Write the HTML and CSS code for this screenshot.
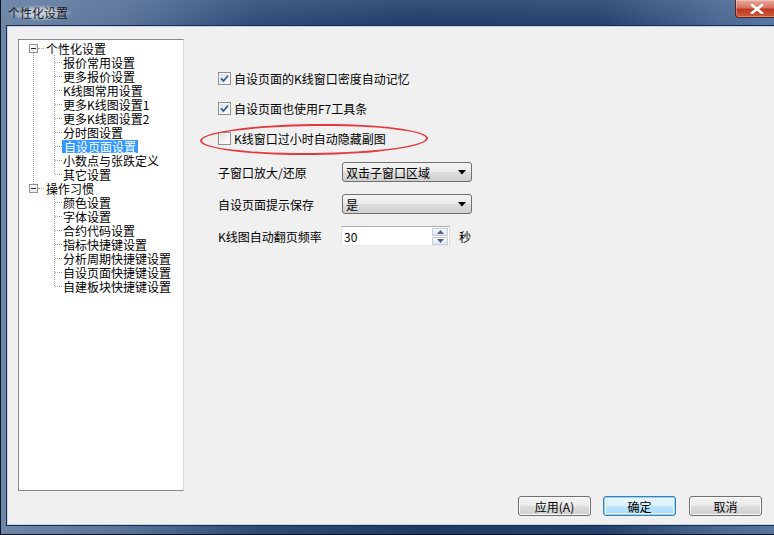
FILE: index.html
```html
<!DOCTYPE html>
<html>
<head>
<meta charset="utf-8">
<link rel="stylesheet" href="styles.css">
</head>
<body>
<div class="window">
  <div class="titlebar">
    <span class="title">个性化设置</span>
    <span class="close"><svg width="14" height="10" viewBox="0 0 14 10"><path d="M2 1 L12 9 M12 1 L2 9" stroke="#fff" stroke-width="2.6" stroke-linecap="square"/></svg></span>
  </div>
  <div class="client">
    <div class="main">
      <ul class="tree">
        <li class="root">
          <div class="row"><span class="exp"></span><span class="hline"></span><span class="lbl">个性化设置</span></div>
          <ul class="kids">
            <li><span class="lbl">报价常用设置</span></li>
            <li><span class="lbl">更多报价设置</span></li>
            <li><span class="lbl">K线图常用设置</span></li>
            <li><span class="lbl">更多K线图设置1</span></li>
            <li><span class="lbl">更多K线图设置2</span></li>
            <li><span class="lbl">分时图设置</span></li>
            <li><span class="lbl sel">自设页面设置</span></li>
            <li><span class="lbl">小数点与张跌定义</span></li>
            <li><span class="lbl">其它设置</span></li>
          </ul>
        </li>
        <li class="root">
          <div class="row"><span class="exp"></span><span class="hline"></span><span class="lbl">操作习惯</span></div>
          <ul class="kids">
            <li><span class="lbl">颜色设置</span></li>
            <li><span class="lbl">字体设置</span></li>
            <li><span class="lbl">合约代码设置</span></li>
            <li><span class="lbl">指标快捷键设置</span></li>
            <li><span class="lbl">分析周期快捷键设置</span></li>
            <li><span class="lbl">自设页面快捷键设置</span></li>
            <li><span class="lbl">自建板块快捷键设置</span></li>
          </ul>
        </li>
      </ul>
      <div class="panel">
        <div class="chk-row">
          <span class="cb on"><svg width="11" height="11" viewBox="0 0 11 11"><path d="M2 5.5 L4.5 8 L9 2.5" fill="none" stroke="#3b5998" stroke-width="1.8"/></svg></span>
          <span>自设页面的K线窗口密度自动记忆</span>
        </div>
        <div class="chk-row">
          <span class="cb on"><svg width="11" height="11" viewBox="0 0 11 11"><path d="M2 5.5 L4.5 8 L9 2.5" fill="none" stroke="#3b5998" stroke-width="1.8"/></svg></span>
          <span>自设页面也使用F7工具条</span>
        </div>
        <div class="chk-row marked">
          <span class="cb"></span>
          <span>K线窗口过小时自动隐藏副图</span>
          <span class="ellipse"></span>
        </div>
        <div class="form-row first">
          <span class="flabel">子窗口放大/还原</span>
          <span class="combo"><span>双击子窗口区域</span><svg width="8" height="5" viewBox="0 0 8 5"><polygon points="0,0 8,0 4,4.5" fill="#000"/></svg></span>
        </div>
        <div class="form-row">
          <span class="flabel">自设页面提示保存</span>
          <span class="combo"><span>是</span><svg width="8" height="5" viewBox="0 0 8 5"><polygon points="0,0 8,0 4,4.5" fill="#000"/></svg></span>
        </div>
        <div class="form-row">
          <span class="flabel">K线图自动翻页频率</span>
          <span class="spin">
            <span class="spin-val">30</span>
            <span class="spin-btns">
              <span class="sb"><svg width="7" height="4" viewBox="0 0 7 4"><polygon points="0,4 7,4 3.5,0" fill="#4d6185"/></svg></span>
              <span class="sb"><svg width="7" height="4" viewBox="0 0 7 4"><polygon points="0,0 7,0 3.5,4" fill="#4d6185"/></svg></span>
            </span>
          </span>
          <span class="unit">秒</span>
        </div>
      </div>
    </div>
    <div class="buttons">
      <span class="btn">应用(A)</span>
      <span class="btn def">确定</span>
      <span class="btn">取消</span>
    </div>
  </div>
</div>
</body>
</html>
```
FILE: styles.css
```css
html, body {
  margin: 0;
  padding: 0;
  width: 774px;
  height: 535px;
  overflow: hidden;
  background: #0f2040;
}
body {
  font-family: "Noto Sans CJK SC", "DejaVu Sans", sans-serif;
  font-size: 12px;
  color: #000;
}
.window {
  width: 782px;
  height: 535px;
  box-sizing: border-box;
  padding: 0 7px 10px 7px;
  display: flex;
  flex-direction: column;
  background:
    linear-gradient(180deg, rgba(120,150,190,0.25) 0px, rgba(0,0,0,0) 26px),
    linear-gradient(90deg, #6f86a6 0px, #5b7498 120px, #2d4a76 260px, #1f3a66 420px, #23406c 600px, #4a6890 720px, #5878a0 782px);
  box-shadow: inset 1px 0 0 #0a1428, inset 0 -1px 0 #0a1428;
}
.titlebar {
  height: 26px;
  display: flex;
  justify-content: space-between;
  align-items: flex-start;
  flex: none;
}
.title {
  margin-top: 5px;
  margin-left: 1px;
  font-size: 12px;
  line-height: 16px;
  color: #1a1a1a;
  padding: 0 4px 0 0;
  background: radial-gradient(ellipse at center, rgba(225,232,240,0.75) 30%, rgba(225,232,240,0) 72%);
}
.close {
  width: 43px;
  height: 18px;
  margin-right: -3px;
  box-sizing: border-box;
  border: 1px solid #5a2020;
  border-top: none;
  border-radius: 0 0 4px 4px;
  background: linear-gradient(180deg, #e8a89a 0%, #d77462 45%, #c0391f 55%, #cd5a3c 100%);
  display: flex;
  align-items: center;
  justify-content: center;
  box-shadow: inset 0 0 0 1px rgba(255,255,255,0.3);
}
.client {
  flex: 1;
  background: #f0f0f0;
  border: 1px solid #c7d2e0;
  box-shadow: 0 0 0 1px #1a2e50;
  padding: 12px 0 0 10px;
  display: flex;
  flex-direction: column;
}
.main {
  display: flex;
  height: 452px;
}
.tree {
  list-style: none;
  margin: 0;
  padding: 1px 0 0 0;
  width: 166px;
  height: 452px;
  box-sizing: border-box;
  background: #fff;
  border: 1px solid #828790;
  border-right-color: #d9d9d9;
  border-bottom-color: #8a8a8a;
}
.root {
  position: relative;
}
.root:first-child::before {
  content: "";
  position: absolute;
  left: 14px;
  top: 12px;
  bottom: -3px;
  border-left: 1px dotted #a0a0a0;
}
.row {
  height: 14px;
  display: flex;
  align-items: center;
  padding-left: 10px;
}
.exp {
  width: 9px;
  height: 9px;
  box-sizing: border-box;
  border: 1px solid #919191;
  background: linear-gradient(135deg, #ffffff, #e6e6e6);
  position: relative;
  z-index: 1;
}
.exp::after {
  content: "";
  position: absolute;
  left: 1px;
  top: 3px;
  width: 5px;
  height: 1px;
  background: #2b2b2b;
}
.hline {
  width: 6px;
  margin-right: 1px;
  border-top: 1px dotted #a0a0a0;
}
.lbl {
  line-height: 13px;
  padding: 0 1px;
  white-space: nowrap;
}
.kids {
  list-style: none;
  margin: 0;
  padding: 0;
  position: relative;
}
.kids::before {
  content: "";
  position: absolute;
  left: 35px;
  top: 0;
  bottom: 7px;
  border-left: 1px dotted #a0a0a0;
}
.kids li {
  height: 14px;
  display: flex;
  align-items: center;
  padding-left: 36px;
}
.kids li::before {
  content: "";
  width: 7px;
  border-top: 1px dotted #a0a0a0;
}
.sel {
  background: #3399ff;
  color: #fff;
  padding: 0 2px;
}
.panel {
  margin-left: 34px;
  padding-top: 30px;
  display: flex;
  flex-direction: column;
}
.chk-row {
  height: 18px;
  display: flex;
  align-items: center;
  gap: 3px;
  margin-bottom: 12px;
  white-space: nowrap;
}
.marked {
  position: relative;
}
.ellipse {
  position: absolute;
  left: -18px;
  top: -5px;
  width: 228px;
  height: 31px;
  box-sizing: border-box;
  border: 2px solid #e23a3f;
  border-radius: 50%;
  transform: rotate(-0.6deg);
}
.cb {
  width: 13px;
  height: 13px;
  box-sizing: border-box;
  border: 1px solid #8f8f8f;
  background: linear-gradient(135deg, #dcdcdc 0%, #f4f4f4 60%, #ffffff 100%);
  box-shadow: inset 0 0 0 1px #f4f4f4;
  display: flex;
  align-items: center;
  justify-content: center;
}
.cb.on {
  background: linear-gradient(135deg, #d9dfe8 0%, #eef2f7 60%, #ffffff 100%);
}
.form-row {
  height: 20px;
  display: flex;
  align-items: center;
  margin-bottom: 12px;
  white-space: nowrap;
}
.form-row.first {
  margin-top: 3px;
}
.flabel {
  width: 124px;
}
.combo {
  width: 130px;
  height: 20px;
  box-sizing: border-box;
  border: 1px solid #707070;
  border-radius: 3px;
  background: linear-gradient(180deg, #f2f2f2 0%, #ebebeb 50%, #dddddd 51%, #cfcfcf 100%);
  display: flex;
  align-items: center;
  justify-content: space-between;
  padding: 0 5px 0 3px;
}
.spin {
  width: 109px;
  height: 20px;
  margin-left: -1px;
  box-sizing: border-box;
  border: 1px solid #abadb3;
  border-left-color: #e2e3ea;
  border-right-color: #dbdfe6;
  border-bottom-color: #e3e9ef;
  background: #fff;
  display: flex;
  align-items: center;
  justify-content: space-between;
  padding: 0 1px 0 2px;
}
.spin-btns {
  display: flex;
  flex-direction: column;
  gap: 0;
  width: 16px;
}
.sb {
  height: 8px;
  box-sizing: border-box;
  border: 1px solid #c7ccd6;
  background: linear-gradient(180deg, #f6f7f9, #e3e7ee);
  display: flex;
  align-items: center;
  justify-content: center;
}
.sb + .sb {
  margin-top: 1px;
}
.unit {
  margin-left: 9px;
}
.buttons {
  margin-top: 5px;
  height: 20px;
  display: flex;
  justify-content: flex-end;
  gap: 12px;
  padding-right: 12px;
}
.btn {
  width: 73px;
  height: 20px;
  box-sizing: border-box;
  border: 1px solid #707070;
  border-radius: 3px;
  background: linear-gradient(180deg, #f2f2f2 0%, #ebebeb 50%, #dddddd 51%, #cfcfcf 100%);
  display: flex;
  align-items: center;
  justify-content: center;
  box-shadow: inset 0 0 0 1px #fbfbfb;
}
.btn.def {
  border-color: #3c7fb1;
  background: linear-gradient(180deg, #eaf6fd 0%, #d9f0fc 50%, #bee6fd 51%, #a7d9f5 100%);
  box-shadow: inset 0 0 0 1px #8fd0f3, inset 0 0 0 2px #eaf6fd;
}
.btn:last-child {
  margin-left: 1px;
}
```
